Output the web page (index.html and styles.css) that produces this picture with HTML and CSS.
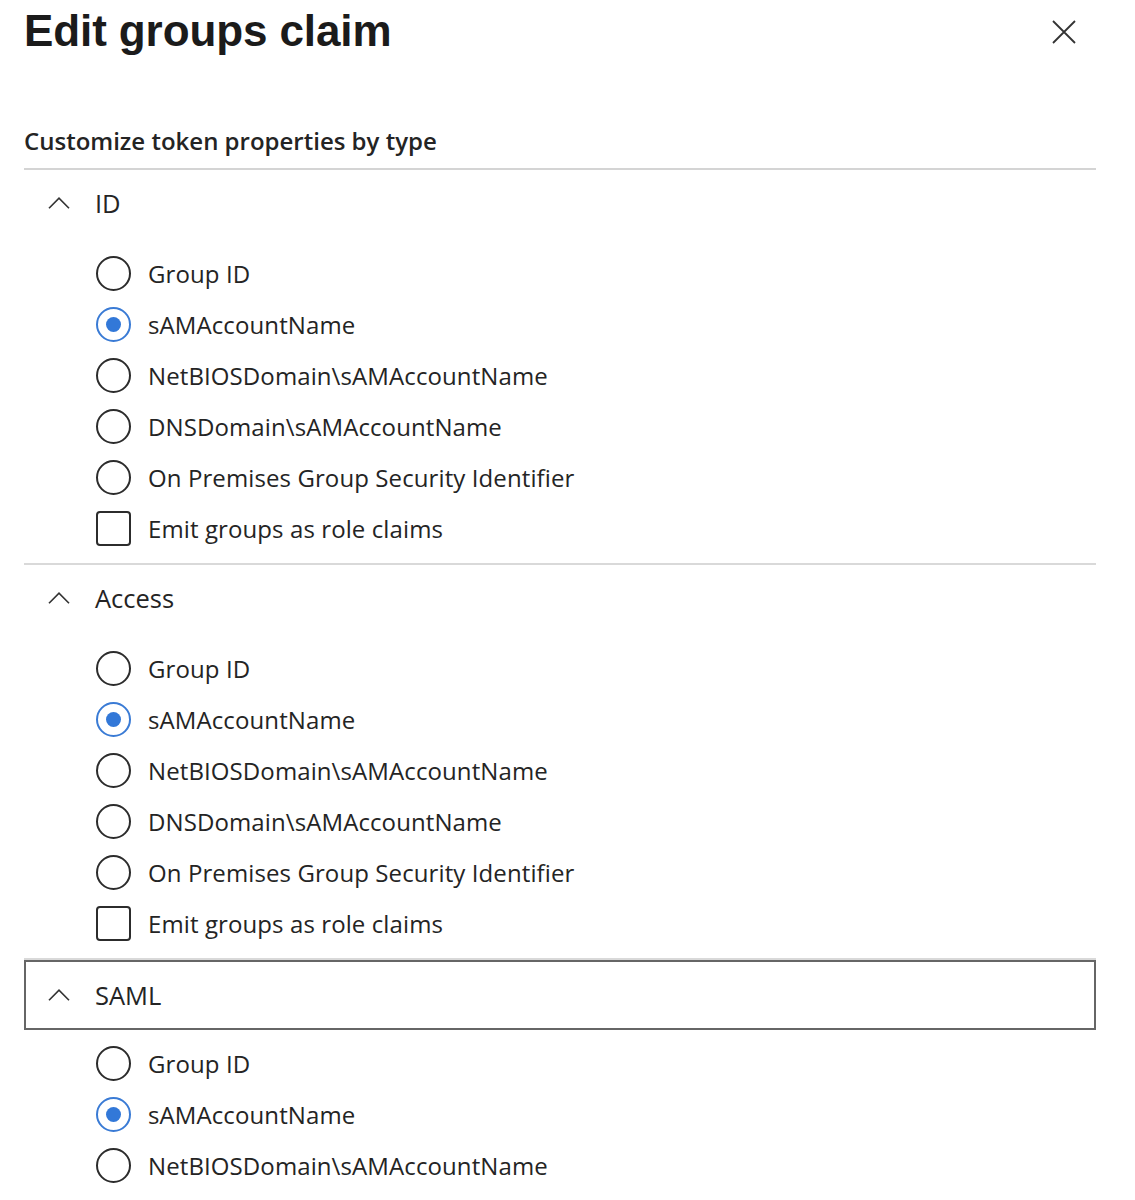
FILE: index.html
```html
<!DOCTYPE html>
<html lang="en">
<head>
<meta charset="utf-8">
<title>Edit groups claim</title>
<link rel="stylesheet" href="styles.css">
</head>
<body>
<div class="panel">
  <div class="top">
    <h1 class="title">Edit groups claim</h1>
    <svg class="close" width="24" height="24" viewBox="0 0 24 24"><path d="M1 1L23 23M23 1L1 23" stroke="#333" stroke-width="1.8" fill="none"/></svg>
  </div>
  <div class="subtitle">Customize token properties by type</div>

  <div class="section">
    <div class="section-head">
      <svg class="chev" width="22" height="12" viewBox="0 0 22 12"><path d="M1 11.3L11 1.2L21 11.3" stroke="#333" stroke-width="1.6" fill="none"/></svg>
      <span class="section-name">ID</span>
    </div>
    <div class="options">
      <div class="opt"><span class="radio"></span><span class="label">Group ID</span></div>
      <div class="opt"><span class="radio on"></span><span class="label">sAMAccountName</span></div>
      <div class="opt"><span class="radio"></span><span class="label">NetBIOSDomain\sAMAccountName</span></div>
      <div class="opt"><span class="radio"></span><span class="label">DNSDomain\sAMAccountName</span></div>
      <div class="opt"><span class="radio"></span><span class="label">On Premises Group Security Identifier</span></div>
      <div class="opt"><span class="check"></span><span class="label">Emit groups as role claims</span></div>
    </div>
  </div>

  <div class="section">
    <div class="section-head">
      <svg class="chev" width="22" height="12" viewBox="0 0 22 12"><path d="M1 11.3L11 1.2L21 11.3" stroke="#333" stroke-width="1.6" fill="none"/></svg>
      <span class="section-name">Access</span>
    </div>
    <div class="options">
      <div class="opt"><span class="radio"></span><span class="label">Group ID</span></div>
      <div class="opt"><span class="radio on"></span><span class="label">sAMAccountName</span></div>
      <div class="opt"><span class="radio"></span><span class="label">NetBIOSDomain\sAMAccountName</span></div>
      <div class="opt"><span class="radio"></span><span class="label">DNSDomain\sAMAccountName</span></div>
      <div class="opt"><span class="radio"></span><span class="label">On Premises Group Security Identifier</span></div>
      <div class="opt"><span class="check"></span><span class="label">Emit groups as role claims</span></div>
    </div>
  </div>

  <div class="section last">
    <div class="section-head focused">
      <svg class="chev" width="22" height="12" viewBox="0 0 22 12"><path d="M1 11.3L11 1.2L21 11.3" stroke="#333" stroke-width="1.6" fill="none"/></svg>
      <span class="section-name">SAML</span>
    </div>
    <div class="options">
      <div class="opt"><span class="radio"></span><span class="label">Group ID</span></div>
      <div class="opt"><span class="radio on"></span><span class="label">sAMAccountName</span></div>
      <div class="opt"><span class="radio"></span><span class="label">NetBIOSDomain\sAMAccountName</span></div>
    </div>
  </div>
</div>
</body>
</html>
```
FILE: styles.css
```css
* { box-sizing: border-box; }
html, body { margin: 0; padding: 0; background: #fff; }
body {
  font-family: "Open Sans", "Noto Sans", "Liberation Sans", sans-serif;
  color: #242424;
  overflow: hidden;
}
.panel {
  width: 1135px;
  padding: 0 39px 0 24px;
}
.top {
  display: flex;
  justify-content: space-between;
  align-items: flex-start;
  padding-top: 5px;
}
.title {
  margin: 0;
  font-family: "Liberation Sans", Arial, sans-serif;
  font-weight: 700;
  font-size: 44px;
  line-height: 52px;
  color: #1b1b1b;
  letter-spacing: -0.1px;
}
.close {
  display: block;
  margin-top: 15px;
  margin-right: 20px;
}
.subtitle {
  margin-top: 68px;
  font-size: 24px;
  font-weight: 600;
  line-height: 32px;
  padding-bottom: 11px;
  border-bottom: 2px solid #d4d4d4;
  color: #242424;
}
.section {
  border-bottom: 2px solid #d9d9d9;
}
.section.last { border-bottom: none; }
.section-head {
  height: 66px;
  display: flex;
  align-items: center;
  padding-left: 24px;
  gap: 25px;
}
.section-head.focused {
  height: 70px;
  border: 2px solid #666;
  padding-left: 22px;
}
.chev { display: block; flex: none; }
.section-name {
  font-size: 25.5px;
  line-height: 32px;
  color: #242424;
  padding-bottom: 1px;
}
.options {
  padding: 12px 0 9px 72px;
}
.section-head.focused + .options { padding-top: 8px; }
.opt {
  height: 51px;
  display: flex;
  align-items: center;
  gap: 17px;
}
.label {
  font-size: 24px;
  line-height: 32px;
  color: #242424;
  letter-spacing: 0.1px;
}
.radio {
  width: 35px;
  height: 35px;
  border-radius: 50%;
  border: 2px solid #2c2c2c;
  flex: none;
  display: flex;
  align-items: center;
  justify-content: center;
}
.radio.on { border-color: #3a7bd5; }
.radio.on::after {
  content: "";
  width: 15px;
  height: 15px;
  border-radius: 50%;
  background: #3278d8;
}
.check {
  width: 35px;
  height: 35px;
  border-radius: 4px;
  border: 2px solid #2c2c2c;
  flex: none;
}
```
